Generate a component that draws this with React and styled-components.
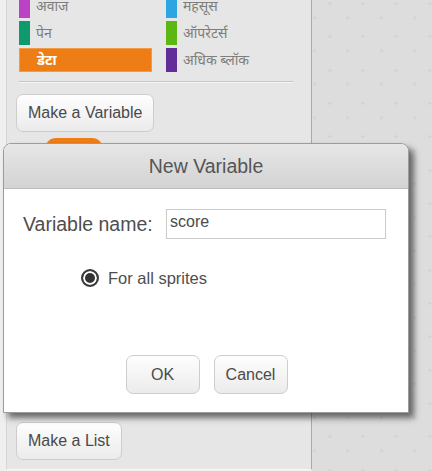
import styled, { createGlobalStyle } from "styled-components";

const GlobalStyle = createGlobalStyle`
  html, body {
    margin: 0;
    padding: 0;
    overflow: hidden;
  }
  body {
    font-family: "Liberation Sans", Arial, sans-serif;
    background: #efefef;
  }
`;

const categories = [
    { text: "अवाज", color: "#bb42c3" },
    { text: "महसूस", color: "#2ca5e2" },
    { text: "पेन", color: "#0e9a6c" },
    { text: "ऑपरेटर्स", color: "#5cb712" },
    { text: "डेटा", color: "#ee7d16", selected: true },
    { text: "अधिक ब्लॉक", color: "#632d99" },
];

const gridSvg = encodeURIComponent(
    `<svg xmlns="http://www.w3.org/2000/svg" width="33.333" height="33.333" viewBox="0 0 33.333 33.333"><path d="M15.5 3.5h4M17.5 1.5v4M0.5 17.5h4M2.5 15.5v4" stroke="#d1d2d1" stroke-width="1" fill="none"/></svg>`
);

const App = () => {
    return (
        <Page>
            <GlobalStyle />
            <Palette>
                <CategoryGrid>
                    {categories.map((cat) => (
                        <Category key={cat.text} $color={cat.color} $selected={cat.selected}>
                            <Swatch $color={cat.color} />
                            <CategoryName $selected={cat.selected}>{cat.text}</CategoryName>
                        </Category>
                    ))}
                </CategoryGrid>
                <Separator />
                <PaletteButton>Make a Variable</PaletteButton>
                <VariableBlock />
                <PaletteButton $top={262}>Make a List</PaletteButton>
            </Palette>
            <ScriptsArea />

            <Dialog>
                <DialogTitle>New Variable</DialogTitle>
                <DialogBody>
                    <FieldRow>
                        <FieldLabel>Variable name:</FieldLabel>
                        <NameInput defaultValue="score" />
                    </FieldRow>
                    <RadioRow>
                        <Radio />
                        <RadioLabel>For all sprites</RadioLabel>
                    </RadioRow>
                    <ButtonRow>
                        <DialogButton>OK</DialogButton>
                        <DialogButton>Cancel</DialogButton>
                    </ButtonRow>
                </DialogBody>
            </Dialog>
        </Page>
    );
};

export default App;

const Page = styled.div`
  position: relative;
  display: flex;
  width: 432px;
  height: 471px;
  background: #efefef;
`;

const Palette = styled.div`
  box-sizing: border-box;
  width: 306px;
  height: 470px;
  margin-left: 6px;
  padding-left: 9px;
  border-left: 1px solid #d4d5d4;
  border-right: 1px solid #a9aaa9;
  border-bottom: 1px solid #f6f6f6;
  background: #e5e6e5;
  display: flex;
  flex-direction: column;
  align-items: flex-start;
`;

const CategoryGrid = styled.div`
  display: grid;
  grid-template-columns: 133px 133px;
  grid-auto-rows: 24px;
  column-gap: 14px;
  row-gap: 3px;
  margin: -6px 0 0 3px;
`;

const Category = styled.div`
  box-sizing: border-box;
  display: flex;
  align-items: center;
  background: ${(p) => (p.$selected ? p.$color : "transparent")};
  border: ${(p) => (p.$selected ? "1px solid #f39a45" : "none")};
`;

const Swatch = styled.div`
  width: 11px;
  align-self: stretch;
  background: ${(p) => p.$color};
`;

const CategoryName = styled.span`
  padding: 2px 0 0 6px;
  font-family: "Noto Sans Devanagari", "Lohit Devanagari", "FreeSans", "Noto Sans", sans-serif;
  font-size: 14px;
  color: ${(p) => (p.$selected ? "#fff" : "#7d7e7d")};
  font-weight: ${(p) => (p.$selected ? "bold" : "normal")};
`;

const Separator = styled.div`
  width: 274px;
  height: 1px;
  margin: 9px 0 0 3px;
  background: #c6c7c6;
  border-bottom: 1px solid #f4f4f4;
`;

const PaletteButton = styled.button`
  box-sizing: border-box;
  height: 38px;
  margin-top: ${(p) => (p.$top ? p.$top : 11)}px;
  padding: 0 11px;
  border: 1px solid #cdcdcd;
  border-radius: 7px;
  background: linear-gradient(#fefefe, #ebebeb);
  font-family: "Liberation Sans", Arial, sans-serif;
  font-size: 16px;
  color: #4a4a4a;
`;

const VariableBlock = styled.div`
  width: 58px;
  height: 22px;
  margin: 6px 0 0 29px;
  border-radius: 11px;
  background: #ee7d16;
`;

const ScriptsArea = styled.div`
  flex: 1;
  height: 471px;
  background-color: #dcdddc;
  background-image: url("data:image/svg+xml,${gridSvg}");
  background-size: 33.333px 33.333px;
`;

const Dialog = styled.div`
  position: absolute;
  left: 3px;
  top: 143px;
  box-sizing: border-box;
  width: 406px;
  height: 270px;
  border: 1px solid #9c9c9c;
  border-radius: 8px 8px 0 0;
  background: #fff;
  box-shadow: 5px 5px 6px rgba(0, 0, 0, 0.55);
  display: flex;
  flex-direction: column;
`;

const DialogTitle = styled.div`
  height: 44px;
  border-bottom: 1px solid #bdbdbd;
  border-radius: 7px 7px 0 0;
  background: linear-gradient(#e6e6e6, #d3d3d3);
  text-align: center;
  line-height: 44px;
  font-size: 19.5px;
  color: #555;
`;

const DialogBody = styled.div`
  display: flex;
  flex-direction: column;
  padding: 20px 22px 0 19px;
`;

const FieldRow = styled.div`
  display: flex;
  align-items: center;
`;

const FieldLabel = styled.span`
  font-size: 19.5px;
  color: #4e4e4e;
`;

const NameInput = styled.input`
  box-sizing: border-box;
  width: 220px;
  height: 30px;
  margin-left: auto;
  padding: 0 3px 5px;
  border: 1px solid #cbcbcb;
  outline: none;
  font-family: "Liberation Sans", Arial, sans-serif;
  font-size: 16px;
  color: #4a4a4a;
`;

const RadioRow = styled.div`
  display: flex;
  align-items: center;
  height: 18px;
  margin: 30px 0 0 58px;
`;

const Radio = styled.span`
  box-sizing: border-box;
  width: 18px;
  height: 18px;
  border: 2px solid #3a3a3a;
  border-radius: 50%;
  background: #333;
  box-shadow: inset 0 0 0 2px #fff;
`;

const RadioLabel = styled.span`
  margin-left: 9px;
  font-size: 16.5px;
  color: #4e4e4e;
`;

const ButtonRow = styled.div`
  display: flex;
  justify-content: center;
  gap: 14px;
  margin-top: 68px;
  padding-left: 4px;
`;

const DialogButton = styled.button`
  box-sizing: border-box;
  width: 74px;
  height: 39px;
  border: 1px solid #cdcdcd;
  border-radius: 7px;
  background: linear-gradient(#fefefe, #ebebeb);
  font-family: "Liberation Sans", Arial, sans-serif;
  font-size: 16px;
  color: #4a4a4a;
`;
